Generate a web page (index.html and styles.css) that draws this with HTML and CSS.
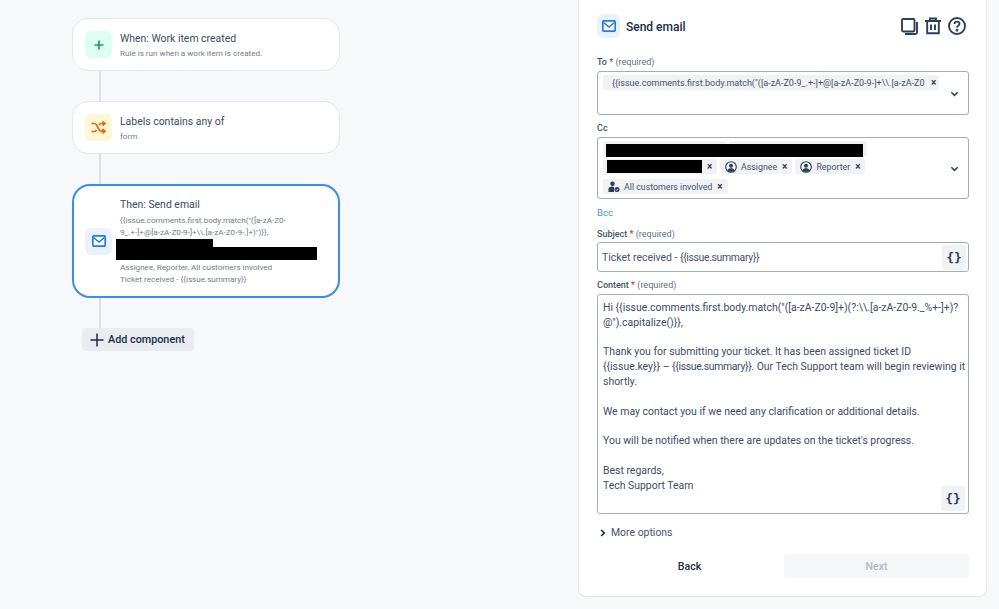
FILE: index.html
```html
<!DOCTYPE html>
<html lang="en">
<head>
<meta charset="utf-8">
<title>Send email</title>
<link rel="stylesheet" href="styles.css">
</head>
<body>
<div class="page">
  <main class="canvas">
    <section class="node">
      <div class="tile tile-green"><svg width="12" height="12" viewBox="0 0 12 12"><path d="M6 1.500v9M1.500 6h9" stroke="#1f9d6a" stroke-width="1.700" fill="none"/></svg></div>
      <div class="node-text">
        <div class="node-title">When: Work item created</div>
        <div class="node-sub">Rule is run when a work item is created.</div>
      </div>
    </section>
    <div class="link"></div>
    <section class="node">
      <div class="tile tile-yellow"><svg width="15" height="13" viewBox="0 0 15 13"><path d="M.5 2.500h2.700c1.200 0 1.900.6 2.500 1.600l2.200 4.400c.6 1 1.300 1.700 2.500 1.700H14M.5 10.500h2.700c1.200 0 1.900-.6 2.300-1.400M8 4c.5-1 1.300-1.500 2.600-1.500H14M11.500.5l2.500 2-2.500 2M11.500 8l2.500 2.200-2.500 2.200" stroke="#e56910" stroke-width="1.700" fill="none"/></svg></div>
      <div class="node-text">
        <div class="node-title">Labels contains any of</div>
        <div class="node-sub">form</div>
      </div>
    </section>
    <div class="link"></div>
    <section class="node node-active">
      <div class="tile tile-blue"><svg width="14" height="12" viewBox="0 0 14 12"><rect x=".8" y=".8" width="12.400" height="10.400" rx="1.300" fill="#fff" stroke="#1d7afc" stroke-width="1.700"/><path d="M1.500 2.500 7 7l5.500-4.500" stroke="#1d7afc" stroke-width="1.600" fill="none"/></svg></div>
      <div class="node-text">
        <div class="node-title">Then: Send email</div>
        <div class="node-sub node-line">{{issue.comments.first.body.match("([a-zA-Z0-<br>9_.+-]+@[a-zA-Z0-9-]+\\.[a-zA-Z0-9-.]+)")}},</div>
        <div class="redact-a"></div>
        <div class="redact-b"></div>
        <div class="node-sub node-line">Assignee, Reporter, All customers involved</div>
        <div class="node-sub node-line">Ticket received - {{issue.summary}}</div>
      </div>
    </section>
    <div class="link"></div>
    <button class="add"><svg width="14" height="14" viewBox="0 0 14 14"><path d="M7 .5v13M.5 7h13" stroke="#172b4d" stroke-width="1.500" fill="none"/></svg>Add component</button>
  </main>

  <aside class="panel">
    <header class="panel-head">
      <div class="tile-head"><svg width="14" height="12" viewBox="0 0 14 12"><rect x=".8" y=".8" width="12.400" height="10.400" rx="1.300" fill="#fff" stroke="#1d7afc" stroke-width="1.700"/><path d="M1.500 2.500 7 7l5.500-4.500" stroke="#1d7afc" stroke-width="1.600" fill="none"/></svg></div>
      <h1 class="panel-title">Send email</h1>
      <div class="head-actions">
        <svg width="17" height="17" viewBox="0 0 17 17" fill="none" stroke="#2c3e5d" stroke-width="1.900"><rect x="1" y="1" width="12.500" height="12.500" rx="1.200"/><path d="M16 4v10.500a1.500 1.500 0 0 1-1.500 1.500H4"/></svg>
        <svg width="16" height="18" viewBox="0 0 16 18" fill="none" stroke="#2c3e5d" stroke-width="1.900"><path d="M0 4h16M5 4V1.500h6V4M2.200 4v12.200h11.600V4M6 7.500v5.500M10 7.500v5.500"/></svg>
        <svg width="18" height="18" viewBox="0 0 18 18" fill="none" stroke="#2c3e5d" stroke-width="1.900"><circle cx="9" cy="9" r="8"/><path d="M6.500 7c0-1.500 1.100-2.400 2.500-2.400s2.500.9 2.500 2.200c0 1.800-2.500 1.900-2.500 3.700"/><circle cx="9" cy="13.300" r=".5" fill="#2c3e5d"/></svg>
      </div>
    </header>

    <label class="label lab-to">To<span class="star"> *</span> <span class="req">(required)</span></label>
    <div class="box box-to">
      <span class="chip chip-long"><span class="chip-text">{{issue.comments.first.body.match("([a-zA-Z0-9_.+-]+@[a-zA-Z0-9-]+\\.[a-zA-Z0</span><span class="x">×</span></span>
      <svg class="chev" width="9" height="6" viewBox="0 0 10 6"><path d="M1.500 1 5 4.500 8.500 1" stroke="#2c3e5d" stroke-width="1.700" fill="none"/></svg>
    </div>

    <label class="label lab-cc">Cc</label>
    <div class="box box-cc">
      <div class="chips-cc">
        <div class="cc-row cc-row-first">
          <span class="chip chip-black-a"></span>
          <span class="chip chip-black-b"></span>
          <span class="black-over"></span>
        </div>
        <div class="cc-row cc-row-second">
          <span class="chip chip-black-c"><span class="black"></span><span class="x">×</span></span>
          <span class="chip"><svg class="user" width="12" height="12" viewBox="0 0 12 12"><circle cx="6" cy="6" r="5.300" fill="none" stroke="#2c3e5d" stroke-width="1.100"/><circle cx="6" cy="4.700" r="2" fill="#2c3e5d"/><path d="M2.500 9.500c.6-1.700 2-2.300 3.500-2.300s2.900.6 3.500 2.300A5 5 0 0 1 6 11a5 5 0 0 1-3.500-1.500z" fill="#2c3e5d"/></svg>Assignee<span class="x">×</span></span>
          <span class="chip"><svg class="user" width="12" height="12" viewBox="0 0 12 12"><circle cx="6" cy="6" r="5.300" fill="none" stroke="#2c3e5d" stroke-width="1.100"/><circle cx="6" cy="4.700" r="2" fill="#2c3e5d"/><path d="M2.500 9.500c.6-1.700 2-2.300 3.500-2.300s2.900.6 3.500 2.300A5 5 0 0 1 6 11a5 5 0 0 1-3.500-1.500z" fill="#2c3e5d"/></svg>Reporter<span class="x">×</span></span>
        </div>
        <div class="cc-row">
          <span class="chip"><svg class="user" width="12" height="12" viewBox="0 0 12 12"><circle cx="4.500" cy="2.700" r="2.200" fill="#2c3e5d"/><path d="M.5 11V8c0-1.600 1.500-2.500 3.500-2.500 1 0 1.500.2 2 .5v5z" fill="#2c3e5d"/><circle cx="9" cy="8.500" r="2.500" fill="#2c3e5d"/><path d="M7.800 8.500l1 .9 1.300-1.500" stroke="#fff" stroke-width=".7" fill="none"/></svg>All customers involved<span class="x">×</span></span>
        </div>
      </div>
      <svg class="chev" width="9" height="6" viewBox="0 0 10 6"><path d="M1.500 1 5 4.500 8.500 1" stroke="#2c3e5d" stroke-width="1.700" fill="none"/></svg>
    </div>

    <a class="bcc">Bcc</a>

    <label class="label lab-subject">Subject<span class="star"> *</span> <span class="req">(required)</span></label>
    <div class="box box-subject">
      <span class="value">Ticket received - <span class="tok">{{issue.summary}}</span></span>
      <span class="smart">{}</span>
    </div>

    <label class="label lab-content">Content<span class="star"> *</span> <span class="req">(required)</span></label>
    <div class="box box-content">
      <p class="para">Hi {{issue.comments.first.body.match("([a-zA-Z0-9]+)(?:\\.[a-zA-Z0-9._%+-]+)?<br>@").capitalize()}},</p>
      <p class="para">Thank you for submitting your ticket. It has been assigned ticket ID<br>{{issue.key}} – <span class="tok">{{issue.summary}}</span>. Our Tech Support team will begin reviewing it<br>shortly.</p>
      <p class="para">We may contact you if we need any clarification or additional details.</p>
      <p class="para">You will be notified when there are updates on the ticket's progress.</p>
      <p class="para">Best regards,<br>Tech Support Team</p>
      <span class="smart smart-over">{}</span>
    </div>

    <div class="more"><svg width="6" height="8" viewBox="0 0 6 8"><path d="M1.200 1 4.200 4 1.200 7" stroke="#172b4d" stroke-width="1.700" fill="none"/></svg>More options</div>

    <footer class="actions">
      <button class="btn btn-back">Back</button>
      <button class="btn btn-next">Next</button>
    </footer>
  </aside>
</div>
</body>
</html>
```

FILE: styles.css
```css
* { box-sizing: border-box; }
html, body { margin: 0; height: 100%; }
body {
  background: #f7f8f9;
  font-family: Roboto, "Noto Sans", sans-serif;
  color: #2c3e5d;
  overflow: hidden;
}
.page { display: flex; height: 609px; }

.canvas {
  width: 578px;
  padding: 18px 0 0 72px;
  display: flex;
  flex-direction: column;
  align-items: flex-start;
}
.node {
  width: 268px;
  height: 53px;
  background: #fff;
  border: 1px solid #e4e6ea;
  border-radius: 16px;
  display: flex;
  align-items: center;
  padding: 0 12px;
  gap: 8px;
}
.node-active {
  height: 114px;
  border: 2px solid #388bff;
  border-radius: 18px;
  padding-left: 11px;
}
.tile {
  width: 27px;
  height: 27px;
  border-radius: 6px;
  display: flex;
  align-items: center;
  justify-content: center;
  flex: none;
}
.tile-green { background: #dcfff1; }
.tile-yellow { background: #fff7d6; }
.tile-blue { background: #e9f2ff; }
.node-text { flex: 1; min-width: 0; padding-top: 2px; }
.node-active .node-text { padding-top: 0; }
.node-title { font-size: 10.450px; line-height: 14px; color: #3b4b6b; }
.node-sub { font-size: 8.100px; line-height: 12px; color: #6f7c91; margin-top: .5px; white-space: nowrap; }
.node-line { margin-top: 0; }
.node-active .node-title { margin-bottom: 2px; }
.redact-a { width: 97px; height: 8px; background: #000; margin: 1px 0 0 -4px; }
.redact-b { width: 201px; height: 13px; background: #000; margin: 0 0 1px -4px; }
.link { width: 2px; height: 30px; background: #dcdfe4; margin-left: 27px; flex: none; }
.add {
  margin-left: 10px;
  width: 112px;
  height: 23px;
  border: 0;
  border-radius: 3px;
  background: #eaecf0;
  color: #172b4d;
  font: 500 10.800px Roboto, sans-serif;
  display: flex;
  align-items: center;
  gap: 4px;
  padding: 0 0 0 8px;
}

.panel {
  width: 409px;
  height: 597px;
  background: #fff;
  border: 1px solid #e4e6ea;
  border-top: 0;
  border-radius: 0 0 8px 8px;
  padding: 14px 17px 0 18px;
  display: flex;
  flex-direction: column;
}
.panel-head { display: flex; align-items: center; height: 24px; }
.tile-head {
  width: 23px; height: 24px; border-radius: 6px; background: #e9f2ff;
  display: flex; align-items: center; justify-content: center;
}
.panel-title { font-size: 12px; font-weight: 500; margin: 1px 0 0 6px; color: #172b4d; }
.head-actions { margin-left: auto; margin-right: 3px; display: flex; align-items: center; gap: 7px; }

.label { display: block; font-size: 9px; line-height: 12px; color: #44546f; font-weight: 500; }
.req { font-weight: 400; color: #626f86; }
.star { color: #c9372c; }
.lab-to { margin-top: 18px; margin-bottom: 3px; }
.lab-cc { margin-top: 7px; margin-bottom: 3px; }
.lab-subject { margin-top: 9px; margin-bottom: 2px; }
.lab-content { margin-top: 7px; margin-bottom: 3px; }

.box {
  border: 1px solid #a5adba;
  border-radius: 3px;
  background: #fff;
  position: relative;
  flex: none;
}
.box-to { height: 44px; padding: 3px 0 0 5px; display: flex; align-items: flex-start; }
.box-cc { height: 62px; padding: 3px 0 0 5px; }
.box-subject { height: 30px; display: flex; align-items: center; padding: 0 2px 0 4px; justify-content: space-between; }
.box-content { height: 220px; padding: 6px 4px 0 5px; }
.chev { position: absolute; right: 9px; top: 19px; }
.box-cc .chev { top: 28px; }
.chips-cc { display: flex; flex-direction: column; }
.cc-row { display: flex; gap: 3px; position: relative; }
.cc-row-first { margin-bottom: 2px; }
.cc-row-second { margin-bottom: 5px; }
.chip {
  background: #f1f2f4;
  border-radius: 3px;
  height: 15px;
  font-size: 8.800px;
  color: #44546f;
  display: inline-flex;
  align-items: center;
  padding: 0 5px 0 4px;
  white-space: nowrap;
}
.chip-long { width: 336px; padding-left: 9px; font-size: 9px; }
.chip-text { width: 314px; flex: none; }
.chip-black-a { width: 123px; height: 16px; }
.chip-black-b { width: 138px; height: 16px; }
.chip-black-c { width: 114px; }
.black { display: block; height: 13px; background: #000; width: 95px; flex: none; }
.black-over { position: absolute; left: 3px; top: 3px; width: 257px; height: 13px; background: #000; }
.x { font-size: 10px; font-weight: 700; color: #2c3e5d; margin-left: 5px; line-height: 1; }
.user { margin-right: 4px; margin-left: 1px; flex: none; }

.bcc { font-size: 9.600px; line-height: 13px; color: #4c8df6; margin-top: 7px; }
.value { font-size: 10.450px; color: #44546f; }
.tok { letter-spacing: -.35px; }
.smart {
  width: 24px; height: 25px; background: #f1f2f4; border-radius: 3px;
  display: flex; align-items: center; justify-content: center;
  font: 700 13px "DejaVu Sans Mono", monospace; color: #2c3e5d;
}
.smart-over { position: absolute; right: 3px; bottom: 2px; }
.para { margin: 0 0 14.800px; font-size: 10.450px; line-height: 14.800px; color: #3c4c6b; white-space: nowrap; }

.more {
  margin-top: 12px;
  font-size: 10.450px;
  line-height: 14px;
  color: #44546f;
  display: flex;
  align-items: center;
  gap: 5px;
  padding-left: 3px;
}
.actions { display: flex; gap: 0; margin-top: 14px; justify-content: space-between; }
.btn { height: 24px; border: 0; border-radius: 3px; width: 185px; font: 500 10.600px Roboto, sans-serif; }
.btn-back { background: transparent; color: #172b4d; }
.btn-next { background: #f5f6f8; color: #b3b9c4; }
```
